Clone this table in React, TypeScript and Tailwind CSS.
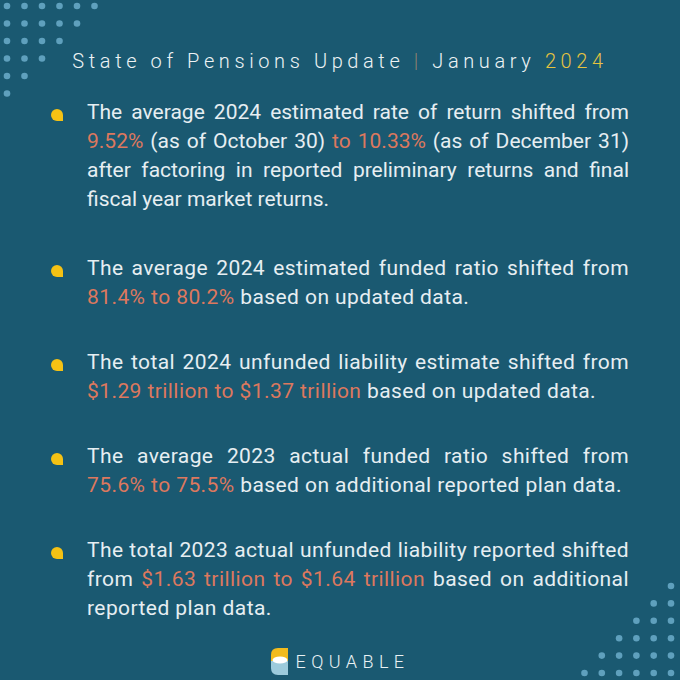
const items = [
  {
    tracking: "tracking-normal",
    parts: [
      { t: "The average 2024 estimated rate of return shifted from " },
      { t: "9.52%", hi: true },
      { t: " (as of October 30) " },
      { t: "to 10.33%", hi: true },
      { t: " (as of December 31) after factoring in reported preliminary returns and final fiscal year market returns." },
    ],
  },
  {
    tracking: "tracking-[0.02em]",
    parts: [
      { t: "The average 2024 estimated funded ratio shifted from " },
      { t: "81.4% to 80.2%", hi: true },
      { t: " based on updated data." },
    ],
  },
  {
    tracking: "tracking-[0.02em]",
    parts: [
      { t: "The total 2024 unfunded liability estimate shifted from " },
      { t: "$1.29 trillion to $1.37 trillion", hi: true },
      { t: " based on updated data." },
    ],
  },
  {
    tracking: "tracking-[0.02em]",
    parts: [
      { t: "The average 2023 actual funded ratio shifted from " },
      { t: "75.6% to 75.5%", hi: true },
      { t: " based on additional reported plan data." },
    ],
  },
  {
    tracking: "tracking-[0.02em]",
    parts: [
      { t: "The total 2023 actual unfunded liability reported shifted from " },
      { t: "$1.63 trillion to $1.64 trillion", hi: true },
      { t: " based on additional reported plan data." },
    ],
  },
];

function Dots({ corner }: { corner: "tl" | "br" }) {
  const dots: { x: number; y: number }[] = [];
  for (let i = 0; i < 6; i++) {
    if (corner === "tl") {
      for (let j = 0; j < 6 - i; j++) dots.push({ x: 7 + 17.5 * j, y: 6 + 17.5 * i });
    } else {
      for (let j = 0; j <= i; j++) dots.push({ x: 110 - 17.3 * j, y: 7 + 17.4 * i });
    }
  }
  return (
    <svg
      width="116"
      height="100"
      className={corner === "tl" ? "absolute left-0 top-0" : "absolute right-[3px] bottom-[1px]"}
    >
      {dots.map((d, i) => (
        <circle key={i} cx={d.x} cy={d.y} r="3.3" fill="#5fa0bd" />
      ))}
    </svg>
  );
}

function Logo() {
  return (
    <div className="flex items-center gap-[8px]">
      <svg width="17" height="27" viewBox="0 0 17 27">
        <path d="M0 13 L0 7 Q0 0 7 0 L17 0 L17 13 Z" fill="#f2bb1d" />
        <path d="M0 13 L17 13 L17 27 L7 27 Q0 27 0 20 Z" fill="#9ccbdc" />
        <ellipse cx="9" cy="12" rx="7.5" ry="3.6" fill="#ffffff" />
      </svg>
      <span className="text-[18px] tracking-[0.3em] text-[#e9f1f4] font-light leading-none">EQUABLE</span>
    </div>
  );
}

export default function App() {
  return (
    <div
      className="relative w-[680px] h-[680px] overflow-hidden bg-[#1a5971] text-[#e6eef2]"
      style={{ fontFamily: "Roboto, 'Noto Sans', sans-serif" }}
    >
      <Dots corner="tl" />
      <Dots corner="br" />
      <div className="flex flex-col h-full pt-[47px]">
        <h1 className="text-center text-[20px] leading-[28px] tracking-[0.23em] font-light text-[#edf3f5]">
          State of Pensions Update <span className="text-[#8f8270]">|</span> January{" "}
          <span className="text-[#e6c340]">2024</span>
        </h1>
        <ul className="mt-[23px] pl-[51px] pr-[51px] flex flex-col gap-[36px]">
          {items.map((item, i) => (
            <li key={i} className={`flex items-start gap-[24px] ${i === 0 ? "mb-[4px]" : ""}`}>
              <span className="mt-[11px] w-[12px] h-[12px] shrink-0 bg-[#f5c214] rounded-tl-full rounded-tr-full rounded-bl-full" />
              <p className={`text-[21px] leading-[29px] text-justify ${item.tracking}`}>
                {item.parts.map((p, k) => (
                  <span key={k} className={p.hi ? "text-[#dd785e]" : undefined}>
                    {p.t}
                  </span>
                ))}
              </p>
            </li>
          ))}
        </ul>
        <div className="mt-auto mb-[5px] flex justify-center">
          <Logo />
        </div>
      </div>
    </div>
  );
}
